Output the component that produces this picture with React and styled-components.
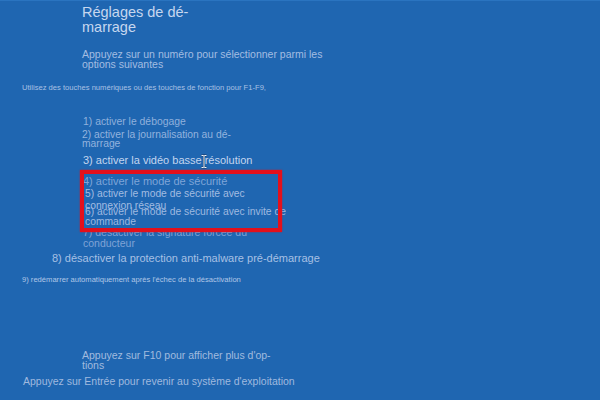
import React from "react";
import styled, { createGlobalStyle } from "styled-components";

const Global = createGlobalStyle`
  html, body { margin: 0; padding: 0; background: #1f66b1; }
  body { font-family: "Liberation Sans", Arial, sans-serif; }
`;

const Screen = styled.div`
  position: relative;
  width: 600px;
  height: 400px;
  overflow: hidden;
  box-sizing: border-box;
  background: #1f66b1;
  border-top: 1px solid #2a74c0;
  display: flex;
  flex-direction: column;
  align-items: flex-start;
  padding-top: 4px;
`;

const Line = styled.div`
  margin-left: ${(p) => p.$x}px;
  margin-top: ${(p) => p.$mt || 0}px;
  font-size: ${(p) => p.$size}px;
  line-height: ${(p) => p.$lh}px;
  color: ${(p) => p.$color};
  white-space: nowrap;
`;

const Title = styled(Line)`
  color: #c6d7ef;
`;

const Highlight = styled.div`
  position: absolute;
  left: 80px;
  top: 169px;
  width: 202px;
  height: 62px;
  box-sizing: border-box;
  border: 4px solid #e3101c;
  box-shadow: 0 0 1.5px rgba(227, 16, 28, 0.8);
  pointer-events: none;
`;

const Cursor = styled.svg`
  position: absolute;
  left: 200px;
  top: 153px;
  width: 8px;
  height: 15px;
`;

export default function App() {
  return (
    <>
      <Global />
      <Screen>
        <Title $x={82} $size={14.5} $lh={14.5}>
          Réglages de dé-
          <br />
          marrage
        </Title>
        <Line $x={82} $mt={14.5} $size={10.5} $lh={10} $color="#a3bde2">
          Appuyez sur un numéro pour sélectionner parmi les
          <br />
          options suivantes
        </Line>
        <Line $x={22} $mt={14.4} $size={7.6} $lh={9} $color="#a9c1e4">
          Utilisez des touches numériques ou des touches de fonction pour F1-F9,
        </Line>
        <Line $x={83} $mt={25} $size={10.4} $lh={10} $color="#8fb0dc">
          1) activer le débogage
        </Line>
        <Line $x={82} $mt={3} $size={10.3} $lh={9.5} $color="#93b3de">
          2) activer la journalisation au dé-
          <br />
          marrage
        </Line>
        <Line $x={83} $mt={5.5} $size={11} $lh={12} $color="#c3d5ef">
          3) activer la vidéo basse résolution
        </Line>
        <Line $x={83} $mt={8.5} $size={11} $lh={12} $color="#7ea4d7">
          4) activer le mode de sécurité
        </Line>
        <Line $x={85} $mt={1.5} $size={10.3} $lh={11.5} $color="#a2bce1">
          5) activer le mode de sécurité avec
          <br />
          connexion réseau
        </Line>
        <Line $x={85} $mt={-4.5} $size={10.3} $lh={10.5} $color="#9eb9e0">
          6) activer le mode de sécurité avec invite de
          <br />
          commande
        </Line>
        <Line $x={83} $mt={-0.8} $size={10.5} $lh={11} $color="#7fa3d6">
          7) désactiver la signature forcée du
          <br />
          conducteur
        </Line>
        <Line $x={52} $mt={2.8} $size={11} $lh={12} $color="#a7c0e4">
          8) désactiver la protection anti-malware pré-démarrage
        </Line>
        <Line $x={22} $mt={11.3} $size={7.6} $lh={9} $color="#b0c6e7">
          9) redémarrer automatiquement après l'échec de la désactivation
        </Line>
        <Line $x={82} $mt={66} $size={10.5} $lh={10} $color="#a1bbdf">
          Appuyez sur F10 pour afficher plus d'op-
          <br />
          tions
        </Line>
        <Line $x={23} $mt={4.4} $size={10.5} $lh={12} $color="#9fb9df">
          Appuyez sur Entrée pour revenir au système d'exploitation
        </Line>
        <Highlight />
        <Cursor viewBox="0 0 8 15">
          <path
            d="M1.5 1.5h2l0.5 0.6 0.5-0.6h2M4 2v11M1.5 13.5h2l0.5-0.6 0.5 0.6h2"
            fill="none"
            stroke="#1a3a66"
            strokeWidth="2"
          />
          <path
            d="M1.5 1.5h2l0.5 0.6 0.5-0.6h2M4 2v11M1.5 13.5h2l0.5-0.6 0.5 0.6h2"
            fill="none"
            stroke="#f2f6fb"
            strokeWidth="1"
          />
        </Cursor>
      </Screen>
    </>
  );
}
